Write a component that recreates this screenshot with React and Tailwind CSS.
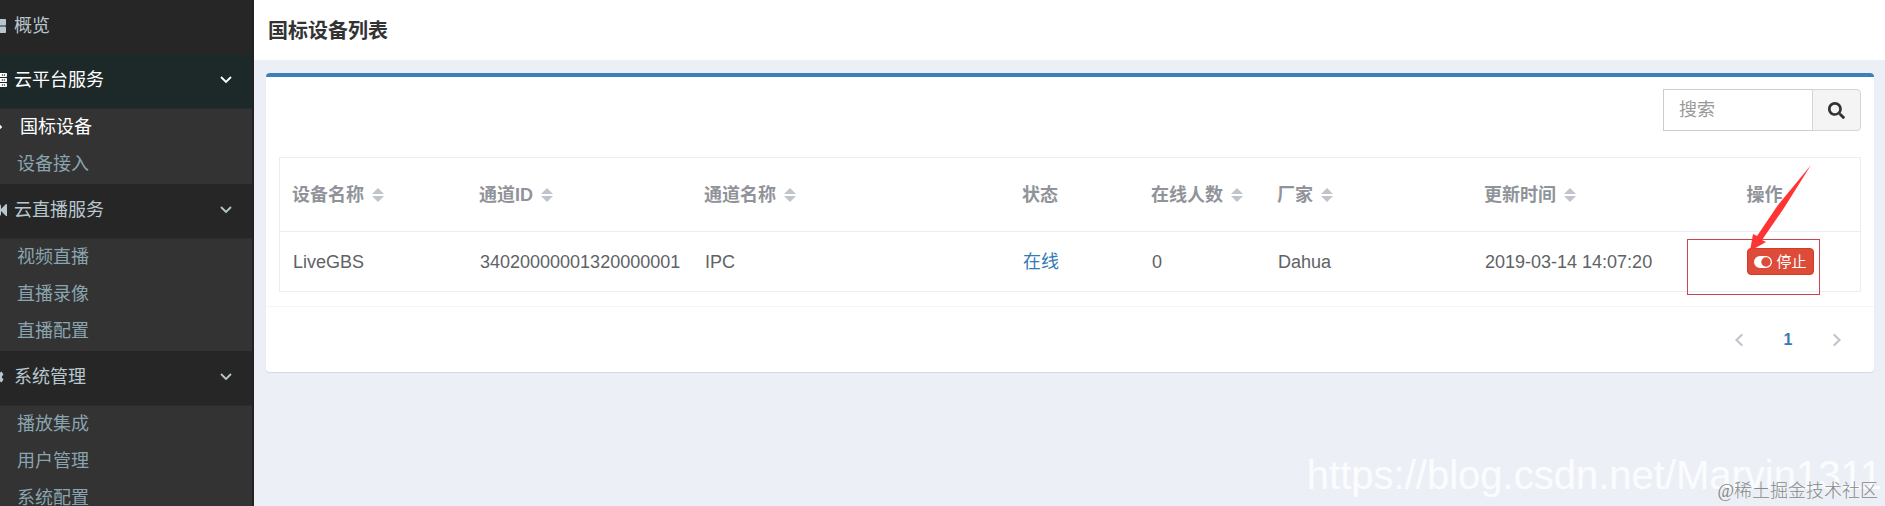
import { useState } from 'react';
import { FaCog, FaSearch, FaServer, FaThLarge } from 'react-icons/fa';

const CameraIcon = ({ className }) => (
    <svg viewBox="0 0 16 16" className={className} fill="currentColor">
        <rect x="0" y="2" width="10" height="12" rx="2" />
        <path d="M10 7 L15 2 Q16 1.600 16 2.600 V13.400 Q16 14.400 15 14 L10 9 Z" />
    </svg>
);

const ToggleIcon = () => (
    <svg viewBox="0 0 18 12" className="h-3 w-[18px] shrink-0" fill="currentColor">
        <path fillRule="evenodd" d="M6 0 H12 A6 6 0 0 1 12 12 H6 A6 6 0 0 1 6 0 Z M12 1.300 A4.700 4.700 0 0 0 12 10.700 A4.700 4.700 0 0 0 12 1.300 Z" />
    </svg>
);

const Chevron = ({ className, points }) => (
    <svg viewBox="0 0 12 12" className={className} fill="none" stroke="currentColor" strokeWidth="1.8">
        <polyline points={points} />
    </svg>
);

const SortIcon = () => (
    <svg viewBox="0 0 12 14" className="h-[14px] w-3 shrink-0" fill="#c0c4cc">
        <path d="M6 0 L12 6 H0 Z" />
        <path d="M0 8 H12 L6 14 Z" />
    </svg>
);

const MENU = [
    { title: '概览', icon: FaThLarge, iconClass: '-ml-[10px] mr-2', items: [] },
    { title: '云平台服务', icon: FaServer, iconClass: '-ml-[9px] mr-[7px]', active: true, items: ['国标设备', '设备接入'] },
    { title: '云直播服务', icon: CameraIcon, iconClass: '-ml-[9px] mr-[7px]', items: ['视频直播', '直播录像', '直播配置'] },
    { title: '系统管理', icon: FaCog, iconClass: '-ml-3 mr-[10px]', items: ['播放集成', '用户管理', '系统配置'] },
];

const COLUMNS = [
    { key: 'nombre', label: '设备名称', width: 'w-[187px]', sortable: true },
    { key: 'canalId', label: '通道ID', width: 'w-[225px]', sortable: true },
    { key: 'canal', label: '通道名称', width: 'w-[318px]', sortable: true },
    { key: 'estado', label: '状态', width: 'w-[129px]' },
    { key: 'online', label: '在线人数', width: 'w-[126px]', sortable: true },
    { key: 'fabricante', label: '厂家', width: 'w-[207px]', sortable: true },
    { key: 'fecha', label: '更新时间', width: 'w-[197px]', sortable: true },
];

const DEVICES = [
    {
        nombre: 'LiveGBS',
        canalId: '34020000001320000001',
        canal: 'IPC',
        estado: '在线',
        online: 0,
        fabricante: 'Dahua',
        fecha: '2019-03-14 14:07:20',
    },
];

const Sidebar = () => (
    <aside className="w-[254px] shrink-0 overflow-hidden border-r-2 border-[#222222] bg-[#262626]">
        <nav>
            {MENU.map(({ title, icon: Icon, iconClass, active, items }) => (
                <div key={title}>
                    <a
                        href="#"
                        className={`flex h-[54px] items-center pb-[3px] ${active ? 'bg-[#1d2829] text-white' : 'text-[#b8c7ce]'}`}
                    >
                        <Icon className={`size-4 shrink-0 ${iconClass}`} />
                        <span className="flex-1">{title}</span>
                        {items.length > 0 && <Chevron className="mr-5 size-3" points="1,3 6,8 11,3" />}
                    </a>
                    {items.length > 0 && (
                        <ul className="border-t border-[#2c2c2c] bg-[#333333] pb-px">
                            {items.map((item) => (
                                <li key={item}>
                                    {item === '国标设备' ? (
                                        <a href="#" className="flex h-[37px] items-center pb-0.5 text-white">
                                            <Chevron className="-ml-2 size-3" points="5,2 9,6 5,10" />
                                            <span className="pl-4">{item}</span>
                                        </a>
                                    ) : (
                                        <a href="#" className="flex h-[37px] items-center pb-0.5 pl-[17px] text-[#8aa4af]">{item}</a>
                                    )}
                                </li>
                            ))}
                        </ul>
                    )}
                </div>
            ))}
        </nav>
    </aside>
);

// Marco y flecha que señalan el botón de detener
const Annotation = () => (
    <>
        <div className="pointer-events-none absolute left-[18px] top-[7px] h-14 w-[133px] border border-[#cc4450]" />
        <svg viewBox="0 0 64 88" className="pointer-events-none absolute -top-[67px] left-[79px] h-[88px] w-16" fill="#fd3535">
            <path d="M63 0 L36 43 L14 75 L18 77 L2 86 L5 69 L9 71 L30 40 Z" />
        </svg>
    </>
);

const App = () => {
    const [busqueda, setBusqueda] = useState('');

    return (
        <div className="relative flex h-screen overflow-hidden bg-[#ecf0f6] font-['Liberation_Sans','Noto_Sans_CJK_SC',sans-serif] text-lg leading-6 text-[#606266]">
            <Sidebar />

            <main className="min-w-0 flex-1">
                <header className="flex h-[60px] items-center bg-white px-[14px] pt-0.5">
                    <h1 className="text-xl font-bold text-[#333333]">国标设备列表</h1>
                </header>

                <section className="ml-3 mr-[11px] mt-[13px] rounded border-t-4 border-[#3c7fb9] bg-white shadow-[0_1px_1px_rgba(0,0,0,0.1)]">
                    <div className="overflow-x-auto px-[13px] pb-[14px] pt-3">
                        <form className="mb-[26px] flex justify-end" onSubmit={(e) => e.preventDefault()}>
                            <input
                                type="text"
                                aria-label="搜索"
                                placeholder="搜索"
                                value={busqueda}
                                onChange={(e) => setBusqueda(e.target.value)}
                                className="h-[42px] w-[150px] border border-[#cccccc] px-[15px] outline-none placeholder:text-[#999999]"
                            />
                            <button
                                type="submit"
                                aria-label="搜索"
                                className="-ml-px flex h-[42px] w-[49px] items-center justify-center rounded-r border border-[#d5d5d5] bg-[#f4f4f4] text-[#333333]"
                            >
                                <FaSearch className="size-[17px]" />
                            </button>
                        </form>

                        <table className="w-full table-fixed border-separate border-spacing-0 border-l border-t border-[#ebeef0] text-left">
                            <thead>
                                <tr className="h-[74px] text-[#909399]">
                                    {COLUMNS.map((col) => (
                                        <th key={col.key} className={`${col.width} border-b border-[#ebeef0] px-3 font-bold`}>
                                            {col.sortable ? (
                                                <button type="button" className="flex items-center gap-2 whitespace-nowrap">
                                                    {col.label}
                                                    <SortIcon />
                                                </button>
                                            ) : (
                                                col.label
                                            )}
                                        </th>
                                    ))}
                                    <th className="w-[192px] border-b border-r border-[#ebeef0] text-center font-bold">操作</th>
                                </tr>
                            </thead>
                            <tbody>
                                {DEVICES.map((d) => (
                                    <tr key={d.canalId} className="h-[60px]">
                                        {COLUMNS.map((col) => (
                                            <td key={col.key} className="whitespace-nowrap border-b border-[#ebeef0] px-[13px]">
                                                {col.key === 'estado' ? (
                                                    <a href="#" className="text-[#337ab7]">{d.estado}</a>
                                                ) : (
                                                    d[col.key]
                                                )}
                                            </td>
                                        ))}
                                        <td className="relative border-b border-r border-[#ebeef0]">
                                            <button
                                                type="button"
                                                className="ml-[78px] flex h-[27px] w-[67px] items-center justify-center gap-1 rounded border border-[#d73925] bg-[#dd4b39] text-[15px] text-white"
                                            >
                                                <ToggleIcon />
                                                停止
                                            </button>
                                            <Annotation />
                                        </td>
                                    </tr>
                                ))}
                            </tbody>
                        </table>
                    </div>

                    <footer className="flex h-[66px] items-center justify-end border-t border-[#f4f4f4] pr-[14px]">
                        <button type="button" aria-label="上一页" className="flex w-12 justify-center text-[#c0c4cc]">
                            <Chevron className="size-[14px]" points="8,1 3,6 8,11" />
                        </button>
                        <button type="button" className="w-12 text-center text-base font-bold text-[#337ab7]">1</button>
                        <button type="button" aria-label="下一页" className="flex w-12 justify-center text-[#c0c4cc]">
                            <Chevron className="size-[14px]" points="4,1 9,6 4,11" />
                        </button>
                    </footer>
                </section>
            </main>

            {/* Marcas de agua */}
            <div className="pointer-events-none absolute bottom-2 right-[3px] whitespace-nowrap text-[40px] leading-[46px] text-white/80">
                https://blog.csdn.net/Marvin1311
            </div>
            <div className="pointer-events-none absolute bottom-[3px] right-[7px] whitespace-nowrap font-['Liberation_Serif','Noto_Sans_CJK_SC',serif] text-lg font-light leading-6 text-[#888888]">
                @稀土掘金技术社区
            </div>
        </div>
    );
};

export default App;
